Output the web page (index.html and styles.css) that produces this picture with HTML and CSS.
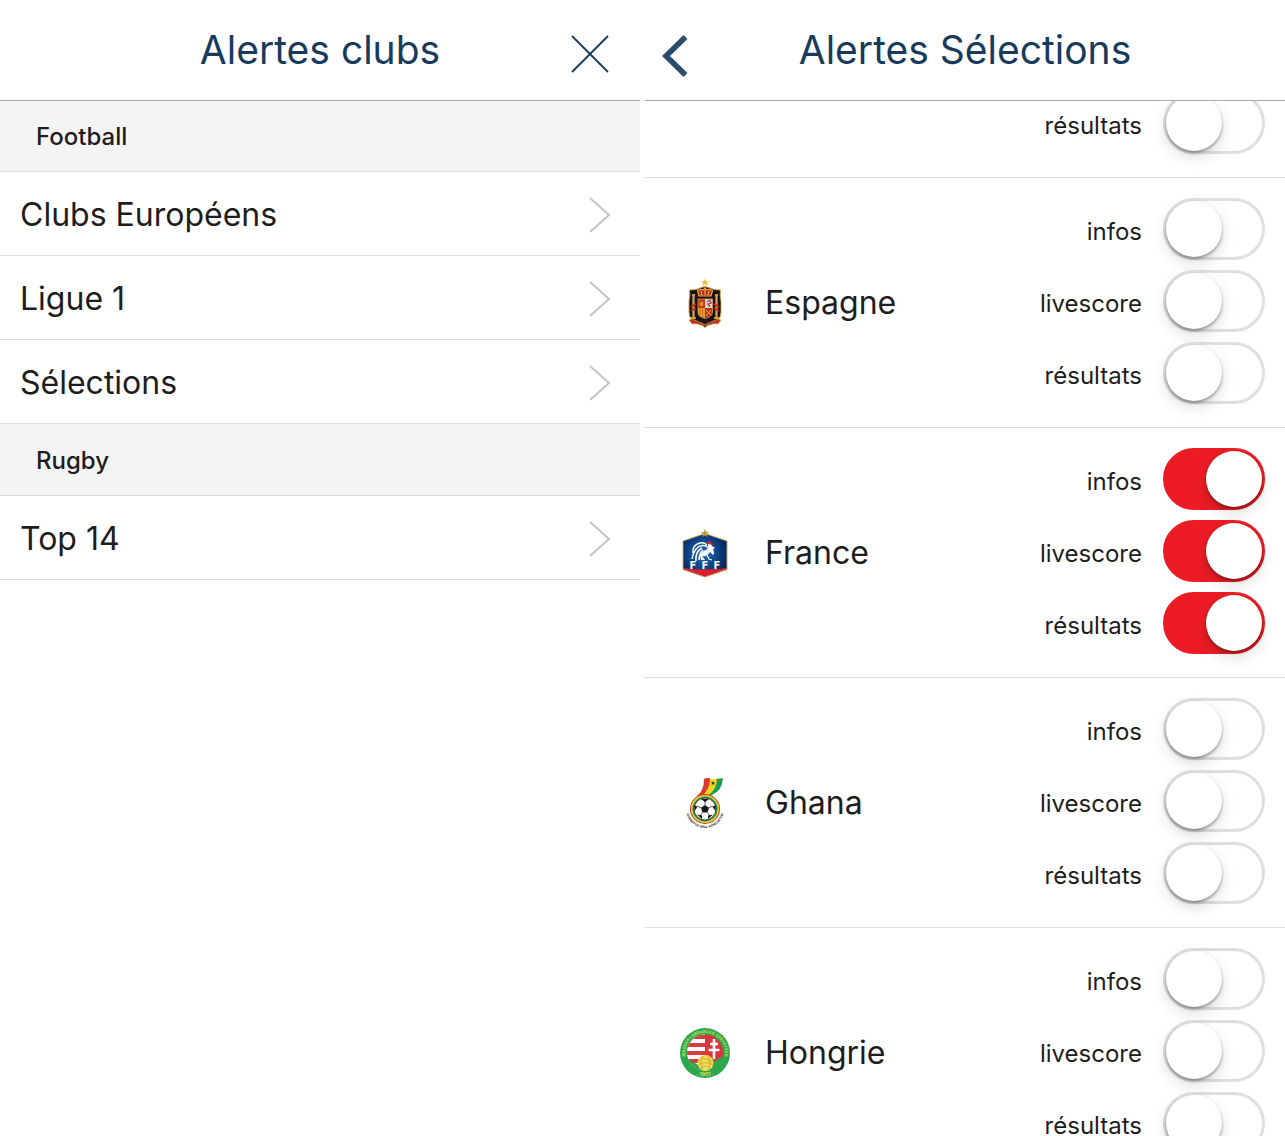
FILE: index.html
```
<!DOCTYPE html>
<html lang="fr">
<head>
    <meta charset="UTF-8">
    <meta name="viewport" content="width=device-width, initial-scale=1.0">
    <title>Alertes</title>
    <link rel="stylesheet" href="styles.css">
</head>
<body>
    <div class="container">
        <section class="panel">
            <header class="topbar">
                <h1>Alertes clubs</h1>
                <button class="close" aria-label="Fermer">
                    <svg width="38" height="38" viewBox="0 0 38 38"><path d="M1 1L37 37M37 1L1 37" stroke="#173b5c" stroke-width="1.8" fill="none"/></svg>
                </button>
            </header>
            <nav class="menu">
                <h2>Football</h2>
                <a href="#">Clubs Européens <svg width="22" height="38" viewBox="0 0 22 38"><path d="M1 2L20 19L1 36"/></svg></a>
                <a href="#">Ligue 1 <svg width="22" height="38" viewBox="0 0 22 38"><path d="M1 2L20 19L1 36"/></svg></a>
                <a href="#">Sélections <svg width="22" height="38" viewBox="0 0 22 38"><path d="M1 2L20 19L1 36"/></svg></a>
                <h2>Rugby</h2>
                <a href="#">Top 14 <svg width="22" height="38" viewBox="0 0 22 38"><path d="M1 2L20 19L1 36"/></svg></a>
            </nav>
        </section>

        <section class="panel">
            <header class="topbar">
                <button class="back" aria-label="Retour">
                    <svg width="26" height="42" viewBox="0 0 26 42"><path d="M23.5 2L4 21L23.5 40" stroke="#2b4c6f" stroke-width="5.6" fill="none"/></svg>
                </button>
                <h1>Alertes Sélections</h1>
            </header>
            <div class="teams">
                <div class="team partial">
                    <div class="switches">
                        <label>résultats <input type="checkbox"></label>
                    </div>
                </div>
                <div class="team">
                    <svg class="badge" viewBox="0 0 50 50">
                        <path d="M25 .5L26 3.2L29 3.3L26.7 5L27.5 8L25 6.3L22.5 8L23.3 5L21 3.3L24 3.2Z" fill="#eebb3c"/>
                        <path d="M9.5 12Q17 12 20 10Q25 7 30 10Q33 12 40.500 12Q39.500 17 41 23V34Q41 43 31 46Q27 47 25 49.500Q23 47 19 46Q9 43 9 34V23Q10.500 17 9.500 12Z" fill="#17131b" stroke="#d6a139" stroke-width=".9"/>
                        <path d="M13.500 18V40M36.500 18V40" stroke="#dba65a" stroke-width="2.200"/>
                        <path d="M12 17H15M35 17H38M11 40H16M34 40H39" stroke="#d99a2b" stroke-width="2"/>
                        <path d="M11 29L16 26M11 33L16 30M34 26L39 29M34 30L39 33" stroke="#c72a1c" stroke-width="2"/>
                        <path d="M19 18L17.500 13Q20 10.500 23 12Q25 9 27 12Q30 10.500 32.500 13L31 18Z" fill="#b92b1f" stroke="#e9b040" stroke-width="1.200"/>
                        <path d="M25 9V17M21 13L22 17M29 13L28 17" stroke="#f2c550"/>
                        <path d="M18 21H25V30H18Z" fill="#bd311d"/>
                        <path d="M25 21H32.500V30H25Z" fill="#ead8c7"/>
                        <path d="M18 30H25V40Q18 39 18 35Z" fill="#e6a22b"/>
                        <path d="M25 30H32.500V35Q32 39 25 40Z" fill="#b73018"/>
                        <path d="M20 28V24H23V28ZM20 30V38M22.500 30V39" stroke="#d4661d" fill="#e6ad3d"/>
                        <path d="M27 24L30 22L31 25L28 26L30 29" stroke="#a14563" stroke-width="1.400" fill="none"/>
                        <path d="M26 32L31 37M31 32L26 38" stroke="#edae3d"/>
                        <path d="M18 21H32.500V34Q32 39 25 40.500Q18 39 18 34Z" stroke="#d9a04c" stroke-width=".8" fill="none"/>
                        <path d="M9 42Q12 40 17 43Q25 48 33 43Q38 40 41 42L38 46Q33 45 30 47H20Q17 45 12 46Z" fill="#b63520" stroke="#dc9d3f" stroke-width=".7"/>
                        <circle cx="25" cy="43.500" r="2.500" fill="#271418"/>
                    </svg>
                    <span class="name">Espagne</span>
                    <div class="switches">
                        <label>infos <input type="checkbox"></label>
                        <label>livescore <input type="checkbox"></label>
                        <label>résultats <input type="checkbox"></label>
                    </div>
                </div>
                <div class="team">
                    <svg class="badge" viewBox="0 0 50 50">
                        <defs>
                            <radialGradient id="blue" cx=".45" cy=".45" r=".6">
                                <stop offset="0" stop-color="#2371b8"/>
                                <stop offset=".7" stop-color="#0c3778"/>
                                <stop offset="1" stop-color="#092253"/>
                            </radialGradient>
                        </defs>
                        <path d="M3 13L25 5.500L47 13V41.500L25 49L3 41.500Z" fill="url(#blue)"/>
                        <path d="M3 40Q25 43 47 40V41.500L25 49L3 41.500Z" fill="#dc1f2e"/>
                        <path d="M3 13L25 5.500L47 13V41.500L25 49L3 41.500Z" fill="none" stroke="#c6ac5b" stroke-width=".9"/>
                        <path d="M25 1L26.200 4L29 4.100L26.800 6L27.600 9L25 7.300L22.400 9L23.200 6L21 4.100L23.800 4Z" fill="#bd9c38"/>
                        <path d="M13 25Q12 17 20 15Q24 14 27 17M12 31Q14 19 22 17.500Q26 17 29 20M16 33Q15 24 22 20M19 32Q19 26 23 22" stroke="#fff" stroke-width="1.500" fill="none"/>
                        <path d="M28 16Q31 15 32 18L35 20L33 21Q35 25 33 27L30 24Q27 29 22 28L25 32H21L20 28Q22 23 26 22Q29 20 28 16Z" fill="#fff"/>
                        <path d="M27 16Q26 13 28.500 14Q30 12 31 14.500L34 17L31 16.500Z" fill="#da2138"/>
                        <path d="M27 27L29 31L32 32" stroke="#fff" stroke-width="1.200" fill="none"/>
                        <text class="fff" x="13" y="41">F</text>
                        <text class="fff" x="25" y="41">F</text>
                        <text class="fff" x="37" y="41">F</text>
                    </svg>
                    <span class="name">France</span>
                    <div class="switches">
                        <label>infos <input type="checkbox" checked></label>
                        <label>livescore <input type="checkbox" checked></label>
                        <label>résultats <input type="checkbox" checked></label>
                    </div>
                </div>
                <div class="team">
                    <svg class="badge" viewBox="0 0 50 50">
                        <path d="M17 18Q24 13 24 1Q27 -1 31 1Q30 13 22 18Z" fill="#d83a2d"/>
                        <path d="M22 18Q30 11 30 1Q35 2 38 0Q38 13 28 17Z" fill="#f4d51d"/>
                        <path d="M27 18Q37 12 37 1L43 0Q42 13 32 17Z" fill="#1b9c51"/>
                        <path d="M33 3L33.600 4.500H35L34 5.500L34.400 7L33 6L31.600 7L32 5.500L31 4.500H32.400Z" fill="#222"/>
                        <circle cx="25" cy="31" r="15" fill="#c43b27"/>
                        <circle cx="25" cy="31" r="14" fill="#f1d432"/>
                        <circle cx="25" cy="31" r="12.500" fill="#1f944f"/>
                        <circle cx="25" cy="31" r="11" fill="#fff" stroke="#222" stroke-width=".8"/>
                        <path d="M25 27L29 29.800L27.500 34.500H22.500L21 29.800Z" fill="#17191c"/>
                        <path d="M25 27V23M29 29.800L33 28M27.500 34.500L30 38M22.500 34.500L20 38M21 29.800L17 28" stroke="#333" stroke-width=".8"/>
                        <path d="M21 21H29L25 24ZM35.500 27V33L32.500 29ZM33 36.500L28 41V37.500ZM17 36.500L22 41V37.500ZM14.500 27V33L17.500 29Z" fill="#17191c"/>
                        <path id="ghanaRing" d="M6 31A19 19 0 0 0 44 31" fill="none"/>
                        <text class="ring dark"><textPath href="#ghanaRing" startOffset="50%">GHANA FOOTBALL ASSOCIATION</textPath></text>
                    </svg>
                    <span class="name">Ghana</span>
                    <div class="switches">
                        <label>infos <input type="checkbox"></label>
                        <label>livescore <input type="checkbox"></label>
                        <label>résultats <input type="checkbox"></label>
                    </div>
                </div>
                <div class="team">
                    <svg class="badge" viewBox="0 0 50 50">
                        <defs><clipPath id="inner"><circle cx="25" cy="24.500" r="18"/></clipPath></defs>
                        <circle cx="25" cy="25" r="25" fill="#2ca84c"/>
                        <g clip-path="url(#inner)">
                            <path d="M6 6H25V44H6Z" fill="#fff"/>
                            <path d="M6 9H25M6 17H25M6 25H25M6 33H25" stroke="#dc3b3b" stroke-width="4"/>
                            <path d="M25 6H44V44H25Z" fill="#dc3438"/>
                            <path d="M34 11V31M30 16H38M28.500 22H39.500" stroke="#fff" stroke-width="2.600"/>
                            <path d="M6 32Q14 33 19 38L31 39Q36 29 44 29V45H6Z" fill="#2ca84c"/>
                        </g>
                        <circle cx="25.500" cy="35" r="8" fill="#f1de55"/>
                        <path d="M18 33Q25 28 32 34M18 37Q25 32 33 37M20 41Q26 35 31 41M23 28Q19 35 23 42M28 28Q32 35 28 42" stroke="#ca9e2b" stroke-width=".8" fill="none"/>
                        <path id="hungaryRing" d="M9 37A20 20 0 1 1 41 37" fill="none"/>
                        <text class="ring gold"><textPath href="#hungaryRing" startOffset="50%">MAGYAR LABDARÚGÓ SZÖVETSÉG</textPath></text>
                        <text class="year" x="25" y="48">· 1901 ·</text>
                    </svg>
                    <span class="name">Hongrie</span>
                    <div class="switches">
                        <label>infos <input type="checkbox"></label>
                        <label>livescore <input type="checkbox"></label>
                        <label>résultats <input type="checkbox"></label>
                    </div>
                </div>
            </div>
        </section>
    </div>
</body>
</html>
```

FILE: styles.css
```
* {
    box-sizing: border-box;
}
body {
    margin: 0;
    background-color: white;
    color: #1d1d1d;
    font-family: Inter, "Liberation Sans", sans-serif;
}
.container {
    display: flex;
    gap: 5px;
    height: 100vh;
    overflow: hidden;
}
.panel {
    flex: 1;
    display: flex;
    flex-direction: column;
    min-width: 0;
}

/* top bar */
.topbar {
    display: grid;
    grid-template-columns: 100px 1fr 100px;
    flex-shrink: 0;
    height: 100px;
    background-color: white;
    box-shadow: 0 1px 0 #a9a9ab;
    position: relative;
    z-index: 1;
}
.topbar h1 {
    grid-column: 2;
    margin: 0;
    font-size: 39px;
    font-weight: 400;
    line-height: 100px;
    text-align: center;
    white-space: nowrap;
    color: #173b5c;
}
.topbar button {
    border: 0;
    background: none;
    cursor: pointer;
}
.topbar svg {
    display: block;
}
.close {
    grid-column: 3;
    justify-self: center;
    padding: 8px 0 0;
}
.back {
    grid-column: 1;
    justify-self: start;
    padding: 12px 0 0 17px;
}

/* left list */
.menu h2 {
    margin: 0;
    padding-left: 36px;
    height: 72px;
    line-height: 74px;
    font-size: 24px;
    font-weight: 500;
    background-color: #f4f4f4;
    border-bottom: 1px solid #dcdcdc;
}
.menu a {
    display: flex;
    align-items: center;
    justify-content: space-between;
    height: 84px;
    padding: 2px 29px 0 20px;
    font-size: 32px;
    color: inherit;
    text-decoration: none;
    border-bottom: 1px solid #dcdcdc;
}
.menu path {
    fill: none;
    stroke: #c4c4c6;
    stroke-width: 2;
}

/* right list */
.teams {
    flex: 1;
    overflow: hidden;
}
.team {
    display: flex;
    align-items: center;
    padding: 0 20px 0 35px;
    border-bottom: 1px solid #dcdcdc;
}
.partial {
    margin-top: -28px;
}
.badge {
    width: 50px;
    height: 50px;
    margin-right: 35px;
}
.name {
    font-size: 32px;
}
.switches {
    display: flex;
    flex-direction: column;
    gap: 10px;
    margin-left: auto;
    padding: 20px 0 23px;
}
.switches label {
    display: flex;
    justify-content: flex-end;
    gap: 21px;
    font-size: 24px;
    line-height: 68px;
    height: 62px;
}
.switches input {
    appearance: none;
    width: 102px;
    height: 62px;
    margin: 0;
    border: 3px solid #dfdfdf;
    border-radius: 31px;
    cursor: pointer;
}
.switches input::before {
    content: "";
    display: block;
    width: 56px;
    height: 56px;
    border-radius: 50%;
    background-color: white;
    box-shadow: 0 2px 3px rgba(0, 0, 0, 0.35), 0 6px 16px rgba(0, 0, 0, 0.14);
}
.switches input:checked {
    background-color: #ed1c24;
    border-color: #ed1c24;
}
.switches input:checked::before {
    margin-left: 40px;
}

/* badge lettering */
.badge text {
    text-anchor: middle;
    font-weight: 700;
}
.fff {
    font-family: "DejaVu Sans", sans-serif;
    font-size: 10px;
    fill: white;
}
.ring {
    font-size: 3px;
}
.dark {
    fill: #222;
}
.gold {
    font-size: 4px;
    fill: #c9dc62;
}
.year {
    font-size: 5px;
    fill: #d5df5a;
}
```
